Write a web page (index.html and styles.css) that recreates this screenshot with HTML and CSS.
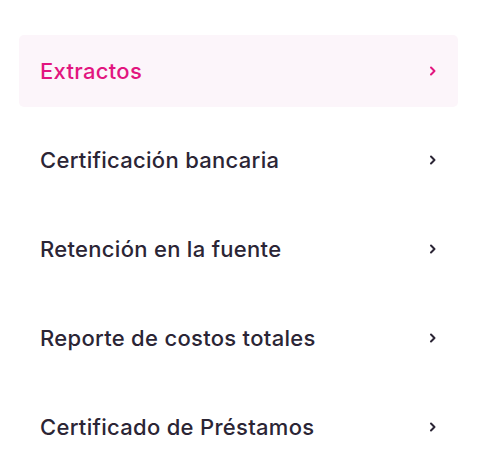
FILE: index.html
```html
<!DOCTYPE html>
<html lang="es">
<head>
<meta charset="utf-8">
<link rel="stylesheet" href="styles.css">
</head>
<body>
<nav class="menu">
  <a class="item active" href="#"><span class="label">Extractos</span><svg class="chev" viewBox="0 0 8 10" width="8" height="10"><path d="M2 1.5 L5.5 5 L2 8.5" fill="none" stroke="currentColor" stroke-width="2" stroke-linecap="round" stroke-linejoin="round"/></svg></a>
  <a class="item" href="#"><span class="label">Certificación bancaria</span><svg class="chev" viewBox="0 0 8 10" width="8" height="10"><path d="M2 1.5 L5.5 5 L2 8.5" fill="none" stroke="currentColor" stroke-width="2" stroke-linecap="round" stroke-linejoin="round"/></svg></a>
  <a class="item" href="#"><span class="label">Retención en la fuente</span><svg class="chev" viewBox="0 0 8 10" width="8" height="10"><path d="M2 1.5 L5.5 5 L2 8.5" fill="none" stroke="currentColor" stroke-width="2" stroke-linecap="round" stroke-linejoin="round"/></svg></a>
  <a class="item" href="#"><span class="label">Reporte de costos totales</span><svg class="chev" viewBox="0 0 8 10" width="8" height="10"><path d="M2 1.5 L5.5 5 L2 8.5" fill="none" stroke="currentColor" stroke-width="2" stroke-linecap="round" stroke-linejoin="round"/></svg></a>
  <a class="item" href="#"><span class="label">Certificado de Préstamos</span><svg class="chev" viewBox="0 0 8 10" width="8" height="10"><path d="M2 1.5 L5.5 5 L2 8.5" fill="none" stroke="currentColor" stroke-width="2" stroke-linecap="round" stroke-linejoin="round"/></svg></a>
</nav>
</body>
</html>
```
FILE: styles.css
```css
html, body {
  margin: 0;
  padding: 0;
  background: #ffffff;
}
body {
  font-family: Inter, "Noto Sans", sans-serif;
}
.menu {
  display: flex;
  flex-direction: column;
  gap: 17px;
  width: 439px;
  margin: 35px 0 0 19px;
}
.item {
  display: flex;
  align-items: center;
  justify-content: space-between;
  height: 72px;
  padding: 0 21px 0 21px;
  border-radius: 5px;
  text-decoration: none;
  color: #2b2535;
  font-size: 22px;
  font-weight: 500;
  letter-spacing: 0.3px;
}
.item.active {
  background: #fcf5fa;
  color: #e2157f;
}
.chev {
  display: block;
}
```
